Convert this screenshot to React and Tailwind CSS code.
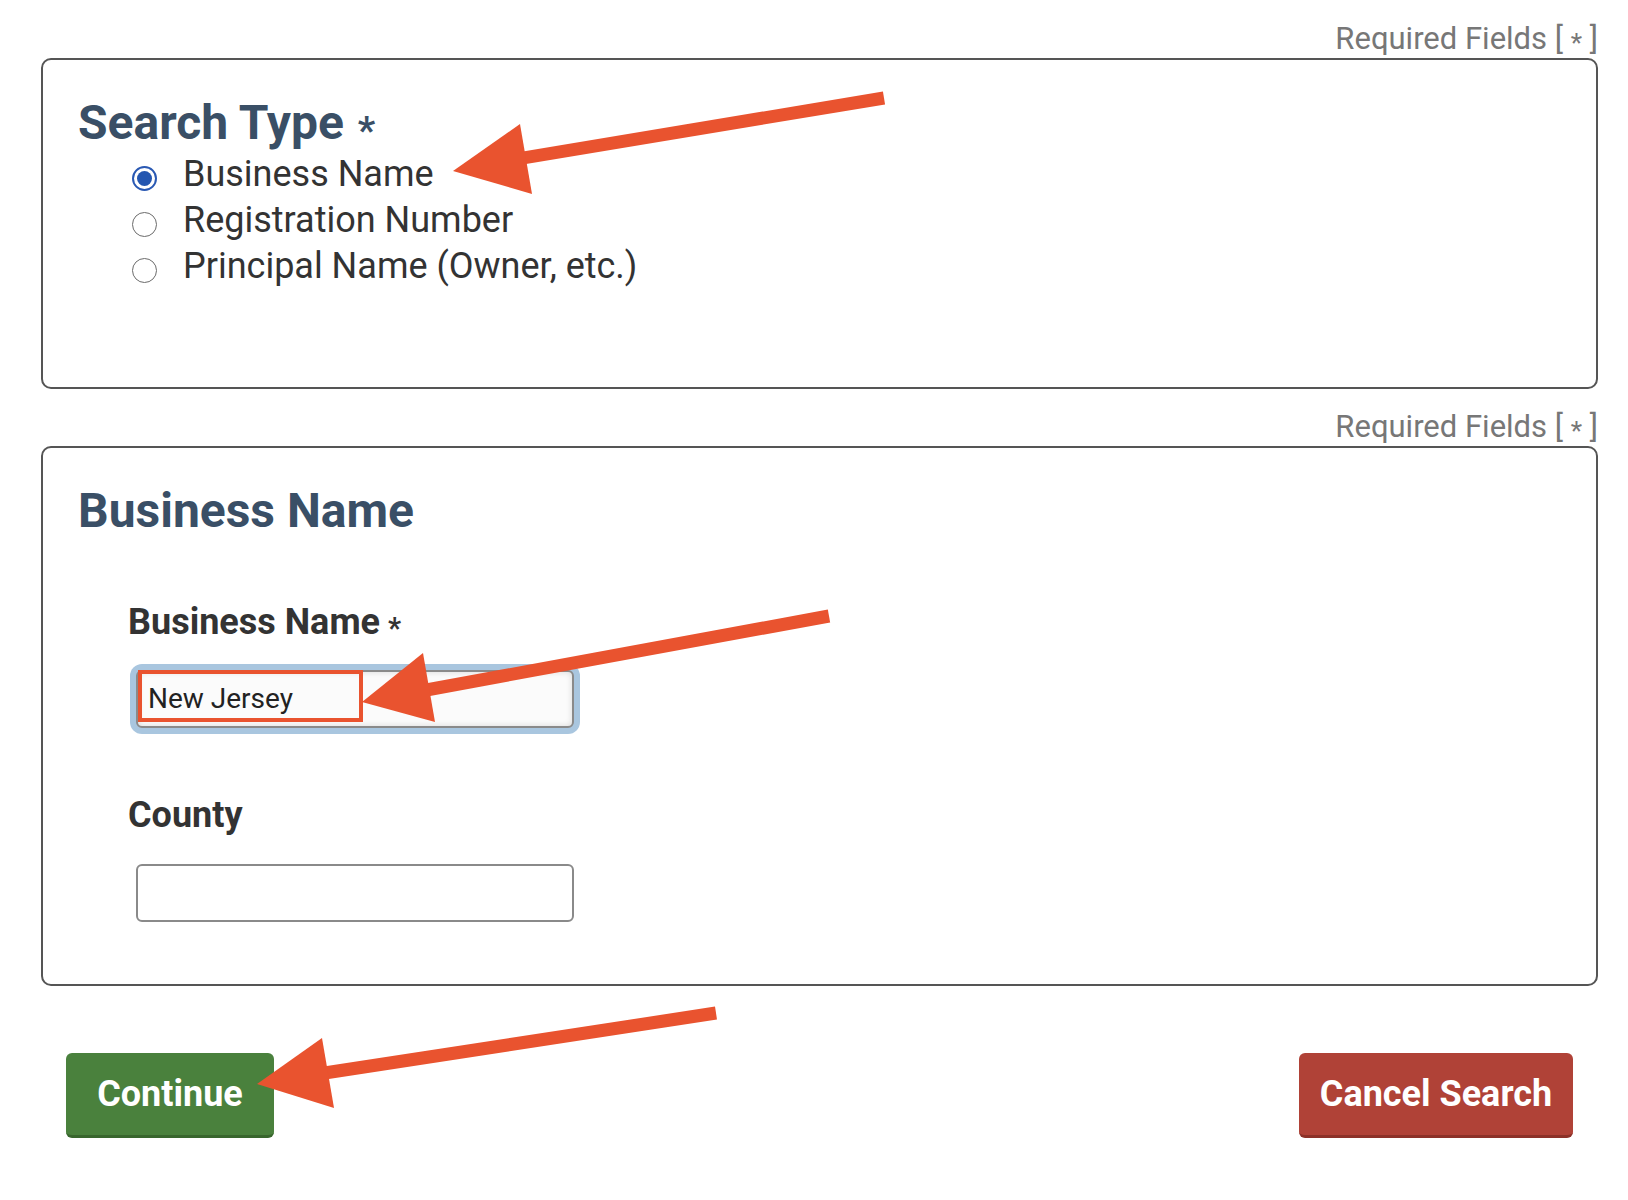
import React, { useState } from 'react';

const SEARCH_TYPES = ['Business Name', 'Registration Number', 'Principal Name (Owner, etc.)'];

const RequiredNote = ({ className = '' }) => (
  <div className={`text-right text-[31px] leading-[36px] text-[#777] ${className}`}>
    Required Fields [ <span className="text-[0.85em] leading-none align-[-0.1em]">*</span> ]
  </div>
);

// required marker; leading-none keeps it from stretching the line box
const Star = ({ className = '' }) => (
  <span className={`text-[0.8em] leading-none align-[-0.14em] ${className}`}>*</span>
);

const Radio = ({ checked }) =>
  checked ? (
    <span className="mt-[8px] w-[25px] h-[25px] rounded-full border-2 border-[#2a59b3] flex items-center justify-center">
      <span className="w-[15px] h-[15px] rounded-full bg-[#2456b0]" />
    </span>
  ) : (
    <span className="mt-[8px] w-[25px] h-[25px] rounded-full border-[1.5px] border-[#6b6b6b] bg-white" />
  );

// annotation arrows + highlight box drawn on top of the form
const Arrows = () => (
  <svg className="absolute inset-0 pointer-events-none" width="1628" height="1200" viewBox="0 0 1628 1200">
    <g fill="#e9532f" stroke="#e9532f">
      <line x1="884" y1="98" x2="505" y2="161" strokeWidth="13" />
      <polygon points="453,171 520,124 532,194" strokeWidth="0" />

      <line x1="829" y1="616" x2="410" y2="693" strokeWidth="13" />
      <polygon points="362,702 423,653 435,722" strokeWidth="0" />

      <line x1="716" y1="1013" x2="305" y2="1076" strokeWidth="13" />
      <polygon points="257,1084 322,1038 334,1108" strokeWidth="0" />
    </g>
    <rect x="140" y="672" width="221" height="48" fill="none" stroke="#e9532f" strokeWidth="4" />
  </svg>
);

export default function App() {
  const [type, setType] = useState(0);

  return (
    <div className="relative min-h-screen bg-white font-['Roboto',sans-serif]">
      <div className="pl-[41px] pr-[30px] pt-[21px]">
        <RequiredNote />

        {/* search type */}
        <section className="mt-[1px] h-[331px] border-2 border-[#555] rounded-[10px] pl-[35px] pt-[35px]">
          <h2 className="text-[48px] leading-[56px] font-bold text-[#3a4f66]">
            Search Type<Star className="ml-[14px]" />
          </h2>
          <div>
            {SEARCH_TYPES.map((label, i) => (
              <div
                key={label}
                className="flex items-center h-[46px] ml-[54px] cursor-pointer"
                onClick={() => setType(i)}
              >
                <Radio checked={type === i} />
                <span className="ml-[26px] text-[36px] leading-[46px] text-[#333]">{label}</span>
              </div>
            ))}
          </div>
        </section>

        <RequiredNote className="mt-[20px]" />

        {/* business name fields */}
        <section className="mt-[1px] border-2 border-[#555] rounded-[10px] pl-[35px] pt-[35px] pb-[62px]">
          <h2 className="text-[48px] leading-[56px] font-bold text-[#3a4f66]">Business Name</h2>

          <label className="block mt-[63px] ml-[50px] text-[36px] leading-[40px] font-bold text-[#333]">
            Business Name<Star className="ml-[8px]" />
          </label>
          <input
            defaultValue="New Jersey"
            className="block mt-[27px] ml-[58px] w-[438px] h-[58px] px-[10px] border-2 border-[#8a8a8a] rounded-[6px] bg-[#fbfbfb] text-[28px] text-[#222] outline-none shadow-[inset_0_0_6px_rgba(0,0,0,0.14),0_0_0_6px_#a9c6df]"
          />

          <label className="block mt-[67px] ml-[50px] text-[36px] leading-[40px] font-bold text-[#333]">
            County
          </label>
          <input className="block mt-[29px] ml-[58px] w-[438px] h-[58px] px-[10px] border-2 border-[#8a8a8a] rounded-[6px] bg-white text-[28px] outline-none" />
        </section>

        <div className="mt-[67px] flex justify-between px-[25px]">
          <button className="w-[208px] h-[85px] rounded-[6px] bg-[#4a813d] border-b-[3px] border-[#38662d] text-white text-[36px] font-bold">
            Continue
          </button>
          <button className="w-[274px] h-[85px] rounded-[6px] bg-[#b04237] border-b-[3px] border-[#8c3128] text-white text-[36px] font-bold">
            Cancel Search
          </button>
        </div>
      </div>

      <Arrows />
    </div>
  );
}
